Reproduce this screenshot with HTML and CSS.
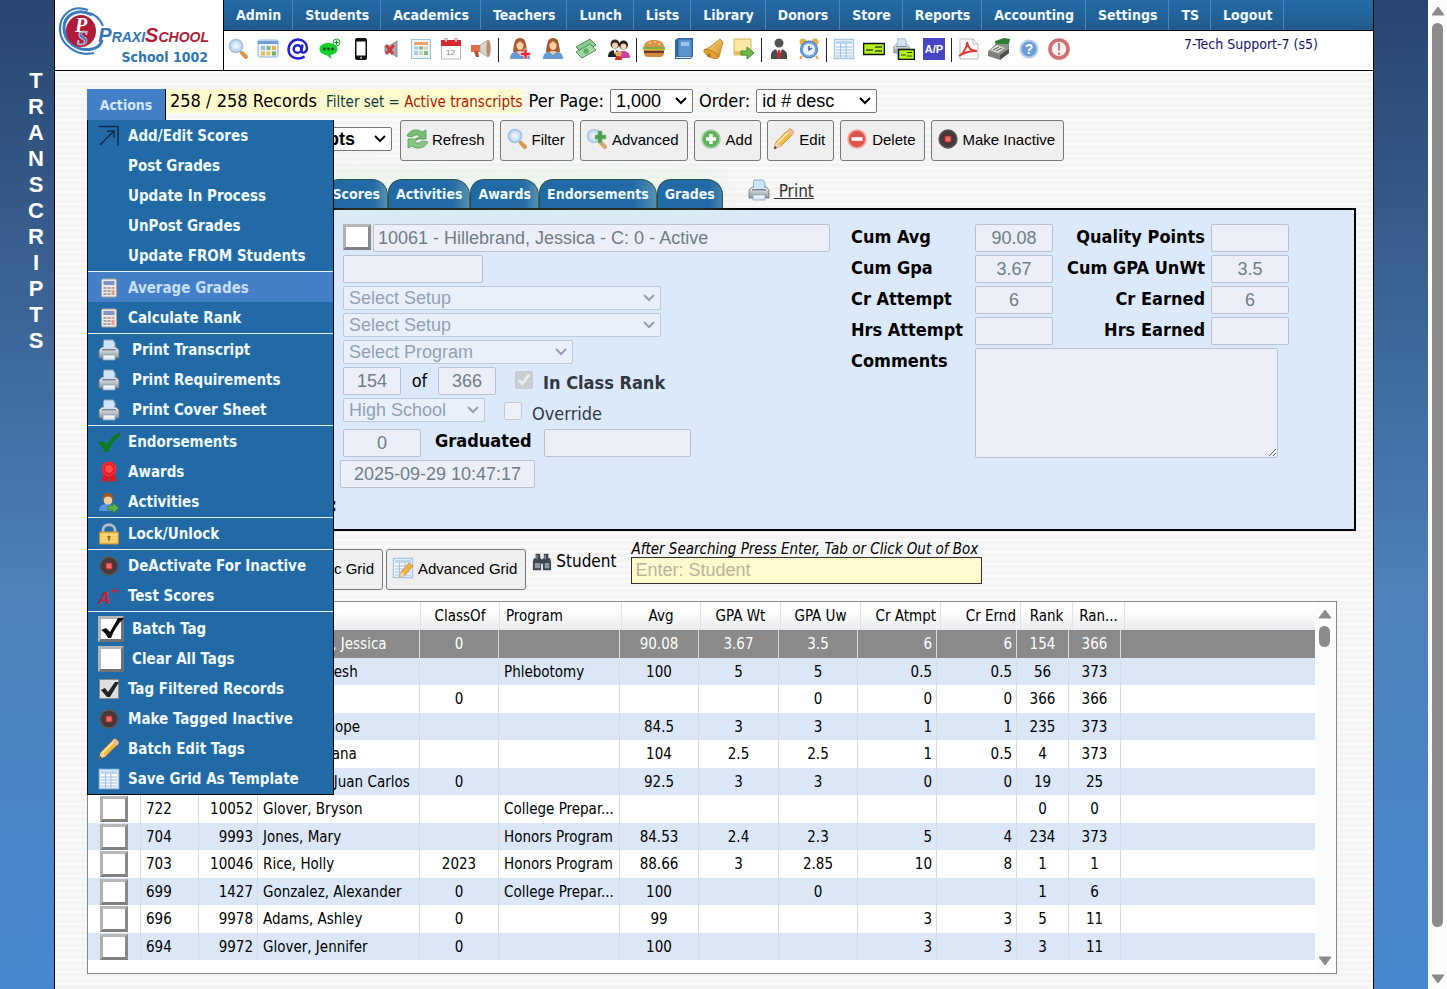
FILE: index.html
```html
<!DOCTYPE html>
<html lang="en">
<head>
    <meta charset="UTF-8">
    <meta name="viewport" content="width=device-width, initial-scale=1.0">
    <title>PraxiSchool - Transcripts</title>
    <link rel="stylesheet" href="styles.css">
</head>
<body>
    <!-- Icon sprite -->
    <svg class="sprite" aria-hidden="true">
        <defs>
            <linearGradient id="paper" x1="0" y1="0" x2="0" y2="1"><stop offset="0" stop-color="#fff"/><stop offset="1" stop-color="#cfdff0"/></linearGradient>
            <linearGradient id="metal" x1="0" y1="0" x2="0" y2="1"><stop offset="0" stop-color="#f2f4f6"/><stop offset="1" stop-color="#8b949e"/></linearGradient>
            <linearGradient id="gold" x1="0" y1="0" x2="1" y2="1"><stop offset="0" stop-color="#ffe08a"/><stop offset="1" stop-color="#d08a1c"/></linearGradient>
            <radialGradient id="lens"><stop offset="0" stop-color="#f4faff"/><stop offset="1" stop-color="#b4d3f2"/></radialGradient>
        </defs>
        <symbol id="i-search" viewBox="0 0 22 22">
            <path d="M13 13l5 5" stroke="#888" stroke-width="2"/>
            <path d="M15 15l4 4" stroke="#d9954a" stroke-width="4" stroke-linecap="round"/>
            <circle cx="9" cy="8" r="6.500" fill="url(#lens)" stroke="#a3bfe0" stroke-width="1.500"/>
        </symbol>
        <symbol id="i-advanced" viewBox="0 0 22 22">
            <path d="M15 15l4 4" stroke="#d9a56a" stroke-width="4" stroke-linecap="round"/>
            <circle cx="8" cy="8" r="6.500" fill="url(#lens)" stroke="#b0c8e4" stroke-width="1.500"/>
            <path d="M12 3h4v4h4v4h-4v4h-4v-4H9V7h3z" fill="#4f9c4c" stroke="#7fbf7a" stroke-width=".6"/>
        </symbol>
        <symbol id="i-window" viewBox="0 0 22 22">
            <rect x="1" y="2" width="20" height="17" rx="1.500" fill="#e9f1fa" stroke="#8fb0d4"/>
            <path d="M1 3h20v3H1z" fill="#6f9fd4"/>
            <path d="M4 8h4v4H4z" fill="#8fc0ea"/><path d="M9.500 8h4v4h-4z" fill="#7fb87a"/><path d="M15 8h4v4h-4z" fill="#e8b04c"/>
            <path d="M4 13.500h4v4H4z" fill="#f0b65a"/><path d="M9.500 13.500h4v4h-4z" fill="#e8c85c"/><path d="M15 13.500h4v4h-4z" fill="#6fae68"/>
        </symbol>
        <symbol id="i-at" viewBox="0 0 22 22">
            <g fill="none" stroke="#2222cc" stroke-width="2.400"><circle cx="10.500" cy="11" r="3.800"/><path d="M15.500 6.500l-1 7c0 2 5.500 1.500 5.500-3.500C20 5 16 1.500 11 1.500S1.500 6 1.500 11.500 6 20.500 11 20.500c3 0 5-.8 6.500-2"/></g>
        </symbol>
        <symbol id="i-chat" viewBox="0 0 22 22">
            <path d="M9.500 5C4.500 5 1 7.500 1 11s3 5.500 7 6l5 4-1-4c4-.5 7-2.500 7-6s-4-6-9.500-6z" fill="#14d02c"/>
            <g fill="#0b4d12"><circle cx="6" cy="11" r="1.400"/><circle cx="10" cy="11" r="1.400"/><circle cx="14" cy="11" r="1.400"/></g>
            <circle cx="18" cy="4.500" r="3.500" fill="#d6f5d8" stroke="#2c9c3a"/><path d="M18 2.500v4M16 4.500h4" stroke="#1d7a28"/>
        </symbol>
        <symbol id="i-phone" viewBox="0 0 22 22">
            <rect x="5" y="0" width="12" height="22" rx="2" fill="#111"/><rect x="6.500" y="3.500" width="9" height="14" fill="#fff"/><circle cx="11" cy="19.700" r="1" fill="#bbb"/>
        </symbol>
        <symbol id="i-mute" viewBox="0 0 22 22">
            <path d="M5 8h4l8-5v16l-8-5H5z" fill="#a9adb2" stroke="#77797c" stroke-width=".8"/>
            <path d="M6 7l7 9M14 7l-8 9" stroke="#cc3a40" stroke-width="3"/>
        </symbol>
        <symbol id="i-schedule" viewBox="0 0 22 22">
            <rect x="1.500" y="1.500" width="19" height="19" fill="#eef5fb" stroke="#9cc0e0"/>
            <path d="M4 4h14v3H4z" fill="#f0a468"/><path d="M4 8.500h4v3H4zM4 13h4v4H4z" fill="#a9cbe8"/>
            <path d="M9 8.500h4v3H9zM14 13h4v4h-4z" fill="#7fb78a"/><path d="M14 8.500h4v3h-4zM9 13h4v4H9z" fill="#c5ddb8"/>
        </symbol>
        <symbol id="i-megaphone" viewBox="0 0 22 22">
            <path d="M1 7l9 0v7H1z" fill="#e0714a"/><path d="M4 13h4l1 6H6z" fill="#b8502c"/>
            <path d="M10 7l8-5v17l-8-5z" fill="#d9d3cc" stroke="#a99f94" stroke-width=".8"/><ellipse cx="18.500" cy="10.500" rx="2.200" ry="8.500" fill="#b98d74"/>
        </symbol>
        <symbol id="i-woman" viewBox="0 0 22 22">
            <path d="M4 14C5 4 6 0 11 0s6 4 7 14z" fill="#a9592c"/>
            <ellipse cx="11" cy="7.500" rx="3.600" ry="4.600" fill="#f6cfa4"/><path d="M7 6c2-1 3-2 4-3 1 1 2 2 4 3-1-4-2-4.500-4-4.500S8 2 7 6z" fill="#a9592c"/>
            <path d="M1 21c0-5 3-7 6-7.500l4 3 4-3c3 .5 6 2.500 6 7.500z" fill="#6a9ad4"/><path d="M8 13h6l-3 4z" fill="#f3c699"/>
        </symbol>
        <symbol id="i-woman-add" viewBox="0 0 22 22">
            <use href="#i-woman"/><path d="M15 11h3v3.500h3.500v3H18V21h-3v-3.500h-3.500v-3H15z" fill="#ec2a2a" stroke="#fff" stroke-width=".6"/>
        </symbol>
        <symbol id="i-money" viewBox="0 0 22 22">
            <path d="M1 9L15 1l6 6L7 15z" fill="#8ccb92" stroke="#4b9455"/><path d="M1 14l14-8 6 6L7 20z" fill="#9fd8a2" stroke="#4b9455"/><circle cx="11" cy="13" r="2.600" fill="#5fa868"/>
        </symbol>
        <symbol id="i-people" viewBox="0 0 22 22">
            <circle cx="7" cy="6" r="4.500" fill="#3c2b22"/><circle cx="7" cy="7.500" r="3" fill="#f3cfa8"/>
            <path d="M0 19c0-5 3-7 7-7s6 3 6 7z" fill="#1f1f1f"/><path d="M5.500 12h3L7 17z" fill="#fff"/>
            <circle cx="15.500" cy="7" r="4.500" fill="#2a1d18"/><circle cx="15.500" cy="8.500" r="3" fill="#f7d7b6"/>
            <path d="M10 20c0-5 2-7 5.500-7s6.500 2 6.500 7z" fill="#c83fa6"/><circle cx="10.500" cy="16" r="3" fill="#e9a75c"/><path d="M7 22c0-3 1.500-4 3.500-4s3.500 1 3.500 4z" fill="#c8302c"/>
        </symbol>
        <symbol id="i-burger" viewBox="0 0 22 22">
            <path d="M1 9c0-5 4-7 10-7s10 2 10 7z" fill="#d99545"/><path d="M0 9h22v2.500H0z" fill="#76b043"/><path d="M0 11h22v1.500H0z" fill="#e8b030"/>
            <path d="M1 12.500h20V15H1z" fill="#6b3a1c"/><path d="M1 15h20c0 3-2 4-4 4H5c-2 0-4-1-4-4z" fill="#d08a3a"/><path d="M6 5h2M11 4h2M15 6h2" stroke="#fff0c8"/>
        </symbol>
        <symbol id="i-book" viewBox="0 0 22 22">
            <path d="M2 2l3-2h15v18l-2 3H2z" fill="#2f66a4"/><path d="M5 1h14v18H5z" fill="#5b93cf" stroke="#2f66a4"/><path d="M8 4h8v4H8z" fill="#9cc3ea"/><path d="M3 19.500h15" stroke="#e8eef5"/>
        </symbol>
        <symbol id="i-bell" viewBox="0 0 22 22">
            <path d="M17 1l3 3-3 11c0 3-1 4-2 5L1 12c2-1 4-2 6-3z" fill="url(#gold)" stroke="#b5781c" stroke-width=".8"/>
            <ellipse cx="8" cy="16" rx="8" ry="3" transform="rotate(28 8 16)" fill="#e0a236" stroke="#b5781c" stroke-width=".8"/><circle cx="6" cy="17.500" r="2" fill="#b5781c"/>
        </symbol>
        <symbol id="i-send" viewBox="0 0 22 22">
            <path d="M1 1h17v16H1z" fill="#fbe6a4" stroke="#d8b35a"/><path d="M2 15h8" stroke="#e0b860" stroke-width="3"/>
            <path d="M8 13h6V9l7 6-7 6v-4H8z" fill="#6cbb4c" stroke="#3c8a2a"/>
        </symbol>
        <symbol id="i-suit" viewBox="0 0 22 22">
            <circle cx="11" cy="5" r="4.500" fill="#5a5552"/><path d="M3 21c-1-7 2-10 8-10s9 3 8 10z" fill="#4a4a4f"/>
            <path d="M8 11h6l-3 7z" fill="#fff"/><path d="M10 12h2l1 6-2 3-2-3z" fill="#d8262c"/>
        </symbol>
        <symbol id="i-clock" viewBox="0 0 22 22">
            <path d="M4 18l-2 3M18 18l2 3" stroke="#d9a23a" stroke-width="2"/><circle cx="5" cy="4" r="3.500" fill="#e4b04c"/><circle cx="17" cy="4" r="3.500" fill="#e4b04c"/>
            <circle cx="11" cy="11.500" r="8.500" fill="#6ca4dc" stroke="#3f78b4"/><circle cx="11" cy="11.500" r="6" fill="#e8f3fc"/><path d="M11 8v4l3-2" stroke="#2d5f96" stroke-width="1.400" fill="none"/>
        </symbol>
        <symbol id="i-table" viewBox="0 0 22 22">
            <rect x="1.500" y="1.500" width="19" height="19" fill="#f6faff" stroke="#a9c8e8" stroke-width="1.500"/><path d="M3 3h16v3H3z" fill="#bcd6f0"/>
            <path d="M3 9h16M3 12h16M3 15h16M3 18h16M7.500 6v14M13 6v14" stroke="#9dbfe2"/>
        </symbol>
        <symbol id="i-check-slip" viewBox="0 0 22 22">
            <path d="M.5 5.500h21v11H.5z" fill="#b4f01e" stroke="#111" stroke-width="1.600"/><path d="M3 12h7M12 9h7M12 13h7" stroke="#3a4a10" stroke-width="1.300"/>
        </symbol>
        <symbol id="i-printer" viewBox="0 0 22 22">
            <path d="M6 1h9l2 3v7H5z" fill="#cfe3f8" stroke="#8aa9c8"/><path d="M1 11l3-3h14l3 3v8H1z" fill="url(#metal)" stroke="#6d757e" stroke-width=".8"/>
            <path d="M4 10h14v1.500H4z" fill="#7d858e"/><path d="M6 2h8l2 2v6H6z" fill="#cfe3f8"/><path d="M5 16h12v5H5z" fill="url(#paper)" stroke="#8fa6bd" stroke-width=".8"/>
        </symbol>
        <symbol id="i-print-check" viewBox="0 0 22 22">
            <svg x="0" y="0" width="17" height="17"><use href="#i-printer"/></svg>
            <path d="M5.500 11.500h16v10h-16z" fill="#b4f01e" stroke="#111" stroke-width="1.500"/><path d="M8 17h5M14 14.500h5M14 18h5" stroke="#3a4a10" stroke-width="1.200"/>
        </symbol>
        <symbol id="i-pdf" viewBox="0 0 22 22">
            <path d="M2 1h13l5 5v15H2z" fill="#fbfbfb" stroke="#bbb"/><path d="M15 1v5h5" fill="none" stroke="#bbb"/>
            <path d="M1 18c4-2 8-8 8-14 1 6 4 9 10 9-5 0-11 0-18 5z" fill="none" stroke="#e03a34" stroke-width="1.800"/>
        </symbol>
        <symbol id="i-register" viewBox="0 0 22 22">
            <path d="M7 3l9-3 6 1-1 5-13 4z" fill="#2f7d33"/><path d="M0 13L8 6l13 0v9l-9 6z" fill="#8c918a"/><path d="M2 12l7-5 8 3-7 5z" fill="#dcdfd6"/>
            <path d="M5 12l6-3M8 13l6-3" stroke="#555"/><path d="M0 13l12 4v5L0 18z" fill="#7b817a"/><path d="M12 17l9-6v4l-9 7z" fill="#4c504b"/>
        </symbol>
        <symbol id="i-alert" viewBox="0 0 22 22">
            <circle cx="11" cy="11" r="9" fill="#fbf3f2" stroke="#cf6f74" stroke-width="3.600"/><path d="M11 5v7.500M11 14.500v2.500" stroke="#c4807c" stroke-width="2.200"/>
        </symbol>
        <symbol id="i-refresh" viewBox="0 0 22 22">
            <path d="M1 8c2-6 10-8 15-4l4-2v9h-10l4-3c-3-2-6-1-8 1z" fill="#79bd74" stroke="#4f9950" stroke-width=".8"/>
            <path d="M22 14c-3 6-11 8-16 4l-4 2v-9h10l-4 3c3 2 6 1 8-1z" fill="#8ac885" stroke="#4f9950" stroke-width=".8"/>
        </symbol>
        <symbol id="i-add" viewBox="0 0 22 22">
            <circle cx="11" cy="11" r="9" fill="#5fb35c" stroke="#a5cfa2" stroke-width="1.600"/><path d="M11 6v10M6 11h10" stroke="#fff" stroke-width="3.400"/>
        </symbol>
        <symbol id="i-pencil" viewBox="0 0 22 22">
            <path d="M1 21l2-7L16 1c2-1 6 3 4 5L8 18z" fill="#f3b843" stroke="#b9822a" stroke-width=".8"/><path d="M4.500 15L16.500 3" stroke="#ffe5a0" stroke-width="2"/>
            <path d="M1 21l2-7 5 4z" fill="#ecd2a8"/><path d="M1 21l1-3 2 2z" fill="#333"/><path d="M14 3l5 5 1.500-2c1-2-2-5-4.500-5z" fill="#eab9a0"/>
        </symbol>
        <symbol id="i-delete" viewBox="0 0 22 22">
            <circle cx="11" cy="11" r="9" fill="#e0544e" stroke="#efa9a4" stroke-width="1.600"/><path d="M5.500 11h11" stroke="#fff" stroke-width="3.600"/>
        </symbol>
        <symbol id="i-stop" viewBox="0 0 22 22">
            <circle cx="11" cy="11" r="9" fill="#45393c" stroke="#5e5456" stroke-width="1.400"/><path d="M8 8h6v6H8z" fill="#f26a6a" stroke="#b5282c"/>
        </symbol>
        <symbol id="i-arrow" viewBox="0 0 22 22">
            <path d="M1 1.500h19v19M2 20L16 6M9 6h7v7" fill="none" stroke="#0d2c4c" stroke-width="1.500"/>
        </symbol>
        <symbol id="i-calc" viewBox="0 0 22 22">
            <rect x="3.500" y="2" width="15" height="18" rx="1.500" fill="#eee9e6" stroke="#a8a19c"/><path d="M5.500 4h11v4h-11z" fill="#7f93c4"/>
            <path d="M5.500 10h3v2h-3zM9.500 10h3v2h-3zM5.500 13h3v2h-3zM9.500 13h3v2h-3zM5.500 16h3v2h-3zM9.500 16h3v2h-3z" fill="#a8a3a6"/><path d="M13.500 10h3v2h-3zM13.500 13h3v5h-3z" fill="#dba18a"/>
        </symbol>
        <symbol id="i-tick" viewBox="0 0 22 22">
            <path d="M0 12l5-2 4 4C12 8 16 4 22 1v4C16 9 12 15 10 21H7C5 17 3 14 0 12z" fill="#0c7a1a"/>
        </symbol>
        <symbol id="i-award" viewBox="0 0 22 22">
            <path d="M6 12L3 21l4-1.500L10 22l1-8 1 8 3-2.500 4 1.500-3-9z" fill="#e81420"/><circle cx="11" cy="8" r="7.500" fill="#f5262e"/><circle cx="11" cy="8" r="4.500" fill="#ff4a4e" stroke="#d8141c"/>
        </symbol>
        <symbol id="i-activity" viewBox="0 0 22 22">
            <path d="M1 20c0-5 3-7 8-7s7 2 7 7z" fill="#5b96d8"/><circle cx="10" cy="7" r="5.500" fill="#9a5a2a"/><ellipse cx="10" cy="9.500" rx="4.200" ry="4" fill="#f5cda2"/>
            <path d="M10 15h5v-3l6 5-6 5v-3h-5z" fill="#5fb34c" stroke="#36812b" stroke-width=".7"/>
        </symbol>
        <symbol id="i-lock" viewBox="0 0 22 22">
            <path d="M5 10V7c0-7 12-7 12 0v3" fill="none" stroke="#b5bcc4" stroke-width="2.800"/><rect x="1.500" y="9" width="19" height="12" rx="1" fill="#f3c65c" stroke="#c08f2e"/>
            <path d="M3 12h16M3 15h16M3 18h16" stroke="#ffe39a"/><circle cx="11" cy="14" r="1.600" fill="#8a6216"/><path d="M10.300 14h1.400v4h-1.400z" fill="#8a6216"/>
        </symbol>
        <symbol id="i-box" viewBox="0 0 26 26">
            <path d="M0 0h26v26H0z" fill="#6e7275"/><path d="M0 0h26l-3 3H3v20l-3 3z" fill="#b4b8ba"/><path d="M3 3h20v20H3z" fill="#fff"/>
        </symbol>
        <symbol id="i-box-tag" viewBox="0 0 26 26">
            <use href="#i-box"/><path d="M3 14l5-2 4 4L20 2h6C20 8 16 14 13 22h-3c-2-4-4-6-7-8z" fill="#0a0a0a"/>
        </symbol>
        <symbol id="i-box-small" viewBox="0 0 22 22">
            <path d="M1.500 1.500h19v19h-19z" fill="#dedede" stroke="#8c8c8c"/><path d="M3 12l4-2 3 4L17 4h4l-9 15H9z" fill="#222"/>
        </symbol>
        <symbol id="i-grid-edit" viewBox="0 0 22 22">
            <use href="#i-table"/><path d="M8 20l1-5 8-9 4 3-8 9z" fill="#f0b548" stroke="#b9822a" stroke-width=".7"/><path d="M8 20l1-5 4 3z" fill="#f3dcb4"/>
        </symbol>
        <symbol id="i-find" viewBox="0 0 22 22">
            <path d="M4 2h5v5H4zM13 2h5v5h-5zM2 7h8v13H1V11zM12 7h8l1 4v9h-9zM9 8h4v5H9z" fill="#3c454f"/><path d="M3 12h6v6H3zM14 12h5v6h-5z" fill="#8c9aa8"/><path d="M5 3h1v5H5zM14 3h1v5h-1z" fill="#a9b4bf"/>
        </symbol>
        <symbol id="i-up" viewBox="0 0 14 10"><path d="M7 1l6 8H1z" fill="#8b8b8b" stroke="#8b8b8b" stroke-linejoin="round"/></symbol>
        <symbol id="i-down" viewBox="0 0 14 10"><path d="M7 9L1 1h12z" fill="#8b8b8b" stroke="#8b8b8b" stroke-linejoin="round"/></symbol>
    </svg>

    <div class="page">
        <aside class="side">
            <h1 class="side-title">TRANSCRIPTS</h1>
        </aside>

        <div class="main">
            <header class="header">
                <div class="logo">
                    <svg class="emblem" viewBox="0 0 48 50" aria-hidden="true">
                        <g fill="none" stroke="#3a7abf">
                            <path d="M30 3C14-3 1 8 2 24c1 13 16 26 34 22" stroke-width="2.200"/>
                            <path d="M34 8C20 0 6 8 6 21c0 14 14 24 28 21 5-1 9-4 10-9" stroke-width="3"/>
                            <path d="M28 6c9 0 14 6 17 13" stroke-width="2"/>
                        </g>
                        <ellipse cx="23" cy="24" rx="15" ry="16" fill="#b01c38"/>
                        <text x="17" y="25" font-size="20" font-weight="bold" font-style="italic" font-family="Liberation Serif" fill="#fff">P</text>
                        <text x="19" y="38" font-size="20" font-weight="bold" font-style="italic" font-family="Liberation Serif" fill="#3a7abf" stroke="#fff" stroke-width=".5">S</text>
                    </svg>
                    <div class="wordmark"><span>Praxi</span><b>School</b></div>
                    <div class="school">School 1002</div>
                </div>
                <div class="header-right">
                    <nav class="nav">
                        <a href="#">Admin</a><a href="#">Students</a><a href="#">Academics</a><a href="#">Teachers</a><a href="#">Lunch</a><a href="#">Lists</a><a href="#">Library</a><a href="#">Donors</a><a href="#">Store</a><a href="#">Reports</a><a href="#">Accounting</a><a href="#">Settings</a><a href="#">TS</a><a href="#">Logout</a>
                    </nav>
                    <div class="shortcuts">
                        <div class="group">
                            <svg class="icon"><use href="#i-search"/></svg>
                            <svg class="icon"><use href="#i-window"/></svg>
                            <svg class="icon"><use href="#i-at"/></svg>
                            <svg class="icon wide"><use href="#i-chat"/></svg>
                            <svg class="icon"><use href="#i-phone"/></svg>
                            <svg class="icon"><use href="#i-mute"/></svg>
                            <svg class="icon"><use href="#i-schedule"/></svg>
                            <svg class="icon" viewBox="0 0 22 22">
                                <rect x="1.500" y="3" width="19" height="18" fill="#fafafa" stroke="#bbb"/>
                                <path d="M1 2h20v6H1z" fill="#d42a2e"/><path d="M5 0h2v4H5zM15 0h2v4h-2z" fill="#fff" stroke="#a33" stroke-width=".6"/>
                                <text x="6" y="17" font-size="8" font-family="Liberation Sans" fill="#888">12</text>
                            </svg>
                            <svg class="icon"><use href="#i-megaphone"/></svg>
                        </div>
                        <div class="group loose">
                            <svg class="icon"><use href="#i-woman-add"/></svg>
                            <svg class="icon"><use href="#i-woman"/></svg>
                            <svg class="icon"><use href="#i-money"/></svg>
                            <svg class="icon"><use href="#i-people"/></svg>
                        </div>
                        <div class="group">
                            <svg class="icon"><use href="#i-burger"/></svg>
                            <svg class="icon"><use href="#i-book"/></svg>
                            <svg class="icon"><use href="#i-bell"/></svg>
                            <svg class="icon"><use href="#i-send"/></svg>
                        </div>
                        <div class="group">
                            <svg class="icon"><use href="#i-suit"/></svg>
                            <svg class="icon"><use href="#i-clock"/></svg>
                        </div>
                        <div class="group">
                            <svg class="icon"><use href="#i-table"/></svg>
                            <svg class="icon"><use href="#i-check-slip"/></svg>
                            <svg class="icon"><use href="#i-print-check"/></svg>
                            <svg class="icon" viewBox="0 0 22 22">
                                <path d="M0 0h22v22H0z" fill="#4646c4"/><text x="11" y="15" text-anchor="middle" font-size="11" font-weight="bold" font-family="Liberation Sans" fill="#fff">A/P</text>
                            </svg>
                        </div>
                        <div class="group">
                            <svg class="icon"><use href="#i-pdf"/></svg>
                            <svg class="icon"><use href="#i-register"/></svg>
                            <svg class="icon" viewBox="0 0 22 22">
                                <circle cx="11" cy="11" r="8.500" fill="#6d9cd6" stroke="#b9cde8" stroke-width="2"/><text x="11" y="16" text-anchor="middle" font-size="14" font-weight="bold" font-family="Liberation Sans" fill="#fff">?</text>
                            </svg>
                            <svg class="icon"><use href="#i-alert"/></svg>
                        </div>
                        <a class="user" href="#">7-Tech Support-7 (s5)</a>
                    </div>
                </div>
            </header>

            <main class="content">
                <div class="status-row">
                    <div class="actions">
                        <button class="actions-btn" type="button">Actions</button>
                        <div class="menu">
                            <div class="menu-group">
                                <a href="#"><svg class="icon"><use href="#i-arrow"/></svg>Add/Edit Scores</a>
                                <a href="#" class="no-icon">Post Grades</a>
                                <a href="#" class="no-icon">Update In Process</a>
                                <a href="#" class="no-icon">UnPost Grades</a>
                                <a href="#" class="no-icon">Update FROM Students</a>
                            </div>
                            <div class="menu-group">
                                <a href="#" class="active"><svg class="icon"><use href="#i-calc"/></svg>Average Grades</a>
                                <a href="#"><svg class="icon"><use href="#i-calc"/></svg>Calculate Rank</a>
                            </div>
                            <div class="menu-group indent">
                                <a href="#"><svg class="icon"><use href="#i-printer"/></svg>Print Transcript</a>
                                <a href="#"><svg class="icon"><use href="#i-printer"/></svg>Print Requirements</a>
                                <a href="#"><svg class="icon"><use href="#i-printer"/></svg>Print Cover Sheet</a>
                            </div>
                            <div class="menu-group">
                                <a href="#"><svg class="icon"><use href="#i-tick"/></svg>Endorsements</a>
                                <a href="#"><svg class="icon"><use href="#i-award"/></svg>Awards</a>
                                <a href="#"><svg class="icon"><use href="#i-activity"/></svg>Activities</a>
                            </div>
                            <div class="menu-group">
                                <a href="#"><svg class="icon"><use href="#i-lock"/></svg>Lock/Unlock</a>
                            </div>
                            <div class="menu-group">
                                <a href="#"><svg class="icon"><use href="#i-stop"/></svg>DeActivate For Inactive</a>
                                <a href="#">
                                    <svg class="icon" viewBox="0 0 22 22">
                                        <text x="0" y="19" font-size="17" font-weight="bold" font-style="italic" font-family="Liberation Sans" fill="#cc2030">A</text><path d="M13 6h7M16.500 3v6" stroke="#b8283c" stroke-width="1.600"/>
                                    </svg>Test Scores</a>
                            </div>
                            <div class="menu-group last">
                                <a href="#"><svg class="icon big"><use href="#i-box-tag"/></svg>Batch Tag</a>
                                <a href="#"><svg class="icon big"><use href="#i-box"/></svg>Clear All Tags</a>
                                <a href="#"><svg class="icon"><use href="#i-box-small"/></svg>Tag Filtered Records</a>
                                <a href="#"><svg class="icon"><use href="#i-stop"/></svg>Make Tagged Inactive</a>
                                <a href="#"><svg class="icon"><use href="#i-pencil"/></svg>Batch Edit Tags</a>
                                <a href="#"><svg class="icon"><use href="#i-table"/></svg>Save Grid As Template</a>
                            </div>
                        </div>
                    </div>
                    <div class="records">258 / 258 Records <span class="filter-set">Filter set = <em>Active transcripts</em></span></div>
                    <label for="perPage">Per Page:</label>
                    <select id="perPage" class="per-page"><option>1,000</option></select>
                    <label for="order">Order:</label>
                    <select id="order" class="order"><option>id # desc</option></select>
                </div>

                <div class="toolbar">
                    <div class="toolbar-lead">
                        <select class="view" aria-label="View"><option>Transcripts</option></select>
                    </div>
                    <button type="button" class="btn"><svg class="icon"><use href="#i-refresh"/></svg>Refresh</button>
                    <button type="button" class="btn"><svg class="icon"><use href="#i-search"/></svg>Filter</button>
                    <button type="button" class="btn"><svg class="icon"><use href="#i-advanced"/></svg>Advanced</button>
                    <button type="button" class="btn"><svg class="icon"><use href="#i-add"/></svg>Add</button>
                    <button type="button" class="btn"><svg class="icon"><use href="#i-pencil"/></svg>Edit</button>
                    <button type="button" class="btn"><svg class="icon"><use href="#i-delete"/></svg>Delete</button>
                    <button type="button" class="btn"><svg class="icon"><use href="#i-stop"/></svg>Make Inactive</button>
                </div>

                <div class="tabs">
                    <div class="tabs-lead"><a class="tab" href="#">Scores</a></div>
                    <a class="tab" href="#">Activities</a>
                    <a class="tab" href="#">Awards</a>
                    <a class="tab" href="#">Endorsements</a>
                    <a class="tab" href="#">Grades</a>
                    <a class="print" href="#"><svg class="icon"><use href="#i-printer"/></svg><span>&nbsp;Print</span></a>
                </div>

                <form class="panel">
                    <div class="details">
                        <div class="line">
                            <input class="box" type="checkbox" aria-label="Tag record">
                            <input class="student" type="text" aria-label="Student" value="10061 - Hillebrand, Jessica - C: 0 - Active" disabled>
                        </div>
                        <div class="line"><input class="code" type="text" aria-label="Code" disabled></div>
                        <select class="setup" aria-label="Transcript setup" disabled><option>Select Setup</option></select>
                        <select class="setup" aria-label="Grade setup" disabled><option>Select Setup</option></select>
                        <select class="program" aria-label="Program" disabled><option>Select Program</option></select>
                        <div class="line">
                            <input class="num rank" id="rank" type="text" value="154" aria-label="Rank" disabled>
                            <label class="of" for="rankOf">of</label>
                            <input class="num rank" id="rankOf" type="text" value="366" disabled>
                            <input class="tick" id="inRank" type="checkbox" checked disabled>
                            <label class="strong soft" for="inRank">In Class Rank</label>
                        </div>
                        <div class="line">
                            <select class="level" aria-label="School level" disabled><option>High School</option></select>
                            <input class="tick" id="override" type="checkbox" disabled>
                            <label class="soft" for="override">Override</label>
                        </div>
                        <div class="line">
                            <input class="num" type="text" value="0" aria-label="Class of" disabled>
                            <label class="strong graduated" for="graduated">Graduated</label>
                            <input class="grad-date" id="graduated" type="text" disabled>
                        </div>
                        <div class="line"><input class="num stamp" type="text" value="2025-09-29 10:47:17" aria-label="Updated" disabled></div>
                        <div class="line locked">:</div>
                    </div>

                    <div class="totals">
                        <label for="cumAvg">Cum Avg</label>
                        <input class="num" id="cumAvg" type="text" value="90.08" disabled>
                        <label class="right" for="quality">Quality Points</label>
                        <input class="num" id="quality" type="text" disabled>
                        <label for="cumGpa">Cum Gpa</label>
                        <input class="num" id="cumGpa" type="text" value="3.67" disabled>
                        <label class="right" for="gpaUnwt">Cum GPA UnWt</label>
                        <input class="num" id="gpaUnwt" type="text" value="3.5" disabled>
                        <label for="crAttempt">Cr Attempt</label>
                        <input class="num" id="crAttempt" type="text" value="6" disabled>
                        <label class="right" for="crEarned">Cr Earned</label>
                        <input class="num" id="crEarned" type="text" value="6" disabled>
                        <label for="hrsAttempt">Hrs Attempt</label>
                        <input class="num" id="hrsAttempt" type="text" disabled>
                        <label class="right" for="hrsEarned">Hrs Earned</label>
                        <input class="num" id="hrsEarned" type="text" disabled>
                        <label for="comments">Comments</label>
                        <textarea id="comments" disabled></textarea>
                    </div>
                </form>

                <div class="search-row">
                    <div class="search-lead"><button type="button" class="btn"><svg class="icon"><use href="#i-table"/></svg>Basic Grid</button></div>
                    <button type="button" class="btn"><svg class="icon"><use href="#i-grid-edit"/></svg>Advanced Grid</button>
                    <label class="find" for="findStudent"><svg class="icon"><use href="#i-find"/></svg>Student</label>
                    <div class="find-box">
                        <i>After Searching Press Enter, Tab or Click Out of Box</i>
                        <input id="findStudent" type="text" placeholder="Enter: Student">
                    </div>
                </div>

                <div class="grid">
                    <div class="grid-tables">
                        <table class="grid-head">
                            <colgroup><col class="c-tag"><col class="c-id"><col class="c-num"><col class="c-name"><col class="c-class"><col class="c-prog"><col class="c-avg"><col class="c-val"><col class="c-val"><col class="c-val"><col class="c-val"><col class="c-rank"><col class="c-rank"><col></colgroup>
                            <tr><th></th><th></th><th></th><th></th><th>ClassOf</th><th class="left">Program</th><th>Avg</th><th>GPA Wt</th><th>GPA Uw</th><th class="end">Cr Atmpt</th><th class="end">Cr Ernd</th><th>Rank</th><th>Ran...</th><th></th></tr>
                        </table>
                        <table class="grid-body">
                            <colgroup><col class="c-tag"><col class="c-id"><col class="c-num"><col class="c-name"><col class="c-class"><col class="c-prog"><col class="c-avg"><col class="c-val"><col class="c-avg"><col class="c-avg"><col class="c-val"><col class="c-rank"><col class="c-rank"><col></colgroup>
                            <tr class="selected"><td></td><td></td><td></td><td>Hillebrand, Jessica</td><td>0</td><td></td><td>90.08</td><td>3.67</td><td>3.5</td><td>6</td><td>6</td><td>154</td><td>366</td><td></td></tr>
                            <tr><td></td><td></td><td></td><td>Kiran, Ganesh</td><td></td><td>Phlebotomy</td><td>100</td><td>5</td><td>5</td><td>0.5</td><td>0.5</td><td>56</td><td>373</td><td></td></tr>
                            <tr><td></td><td></td><td></td><td></td><td>0</td><td></td><td></td><td></td><td>0</td><td>0</td><td>0</td><td>366</td><td>366</td><td></td></tr>
                            <tr><td></td><td></td><td></td><td>Weiss, Ashope</td><td></td><td></td><td>84.5</td><td>3</td><td>3</td><td>1</td><td>1</td><td>235</td><td>373</td><td></td></tr>
                            <tr><td></td><td></td><td></td><td>Cason, Briana</td><td></td><td></td><td>104</td><td>2.5</td><td>2.5</td><td>1</td><td>0.5</td><td>4</td><td>373</td><td></td></tr>
                            <tr><td></td><td></td><td></td><td>Gutierrez, Juan Carlos</td><td>0</td><td></td><td>92.5</td><td>3</td><td>3</td><td>0</td><td>0</td><td>19</td><td>25</td><td></td></tr>
                            <tr><td><input class="box" type="checkbox" aria-label="Tag 722"></td><td>722</td><td>10052</td><td>Glover, Bryson</td><td></td><td>College Prepar...</td><td></td><td></td><td></td><td></td><td></td><td>0</td><td>0</td><td></td></tr>
                            <tr><td><input class="box" type="checkbox" aria-label="Tag 704"></td><td>704</td><td>9993</td><td>Jones, Mary</td><td></td><td>Honors Program</td><td>84.53</td><td>2.4</td><td>2.3</td><td>5</td><td>4</td><td>234</td><td>373</td><td></td></tr>
                            <tr><td><input class="box" type="checkbox" aria-label="Tag 703"></td><td>703</td><td>10046</td><td>Rice, Holly</td><td>2023</td><td>Honors Program</td><td>88.66</td><td>3</td><td>2.85</td><td>10</td><td>8</td><td>1</td><td>1</td><td></td></tr>
                            <tr><td><input class="box" type="checkbox" aria-label="Tag 699"></td><td>699</td><td>1427</td><td>Gonzalez, Alexander</td><td>0</td><td>College Prepar...</td><td>100</td><td></td><td>0</td><td></td><td></td><td>1</td><td>6</td><td></td></tr>
                            <tr><td><input class="box" type="checkbox" aria-label="Tag 696"></td><td>696</td><td>9978</td><td>Adams, Ashley</td><td>0</td><td></td><td>99</td><td></td><td></td><td>3</td><td>3</td><td>5</td><td>11</td><td></td></tr>
                            <tr><td><input class="box" type="checkbox" aria-label="Tag 694"></td><td>694</td><td>9972</td><td>Glover, Jennifer</td><td>0</td><td></td><td>100</td><td></td><td></td><td>3</td><td>3</td><td>3</td><td>11</td><td></td></tr>
                        </table>
                    </div>
                    <div class="scroll grid-scroll">
                        <svg class="caret"><use href="#i-up"/></svg>
                        <div class="thumb"></div>
                        <svg class="caret last"><use href="#i-down"/></svg>
                    </div>
                </div>
            </main>
        </div>

        <div class="side"></div>

        <div class="scroll page-scroll">
            <svg class="caret"><use href="#i-up"/></svg>
            <div class="thumb"></div>
            <svg class="caret last"><use href="#i-down"/></svg>
        </div>
    </div>
</body>
</html>
```
FILE: styles.css
```css
* {
    box-sizing: border-box;
}

body {
    margin: 0;
    font-family: "DejaVu Sans Condensed", "Noto Sans", sans-serif;
    font-size: 14px;
    color: #000;
}

a {
    color: inherit;
    text-decoration: none;
}

input, select, textarea, button {
    font-family: "Liberation Sans", Arial, sans-serif;
    font-size: 18px;
    margin: 0;
}

select {
    appearance: none;
    height: 24px;
    padding: 0 24px 0 5px;
    border: 1px solid #767676;
    border-radius: 2px;
    background: #fff url("data:image/svg+xml,%3Csvg xmlns='http://www.w3.org/2000/svg' width='12' height='8'%3E%3Cpath d='M1 1l5 5 5-5' fill='none' stroke='black' stroke-width='2'/%3E%3C/svg%3E") no-repeat right 5px center;
    color: #000;
}

select:disabled {
    background-image: url("data:image/svg+xml,%3Csvg xmlns='http://www.w3.org/2000/svg' width='12' height='8'%3E%3Cpath d='M1 1l5 5 5-5' fill='none' stroke='slategray' stroke-width='2'/%3E%3C/svg%3E");
}

.sprite {
    position: absolute;
    width: 0;
    height: 0;
}

.icon {
    width: 22px;
    height: 22px;
    flex: none;
}

/* Page frame */
.page {
    display: grid;
    grid-template-columns: 54px 1fr 54px 19px;
    height: 100vh;
    overflow: hidden;
    background: linear-gradient(#27466f, #4f81bb 60%, #4688d0);
}

.side-title {
    width: 20px;
    margin: 68px 0 0 26px;
    font: bold 22px/26px "Liberation Sans", Arial, sans-serif;
    color: #fff;
    text-align: center;
    word-break: break-all;
}

.main {
    border: solid #000;
    border-width: 0 1px;
    background: repeating-linear-gradient(#fcfcfc 0, #f3f3f3 2px, #f3f3f3 4px, #fcfcfc 6px);
}

/* Header */
.header {
    display: flex;
    height: 71px;
    background: #fff;
    border-bottom: 1px solid #000;
}

.logo {
    position: relative;
    width: 169px;
    border-right: 1px solid #000;
}

.emblem {
    position: absolute;
    left: 3px;
    top: 7px;
    width: 48px;
    height: 50px;
}

.wordmark {
    position: relative;
    padding: 24px 14px 0 0;
    font: italic bold 20px/22px "Liberation Sans", Arial, sans-serif;
    font-variant: small-caps;
    text-align: right;
    color: #3474b4;
}

.wordmark b {
    color: #b01c38;
}

.school {
    padding-right: 15px;
    text-align: right;
    font-weight: bold;
    line-height: 22px;
    color: #2f76b4;
}

.header-right {
    flex: 1;
}

.nav {
    display: flex;
    height: 31px;
    border-bottom: 1px solid #000;
    background: linear-gradient(#236ba8, #225a8c);
}

.nav a {
    padding: 0 11px 0 12px;
    border-right: 1px solid #4a86ba;
    font-weight: bold;
    line-height: 30px;
    color: #f0f8ff;
}

.shortcuts {
    display: flex;
    padding: 7px 55px 0 0;
}

.group {
    display: flex;
    gap: 8px;
    height: 24px;
    padding: 0 6px;
    border-left: 1px solid #222;
}

.group:first-child {
    padding-left: 3px;
    border: 0;
}

.group.loose {
    gap: 11px;
    padding-left: 10px;
}

.icon.wide {
    width: 25px;
}

.user {
    margin-left: auto;
    line-height: 12px;
    color: #14146e;
}

/* Status row and actions menu */
.content {
    padding: 18px 17px 0 32px;
}

.status-row {
    display: flex;
    height: 31px;
    line-height: 24px;
    font-size: 18px;
}

.status-row label {
    padding: 0 6px;
}

.actions {
    position: relative;
}

.actions-btn {
    width: 79px;
    height: 31px;
    padding: 0;
    border: 0;
    border-right: 1px solid #000;
    background: #4380c8;
    font: bold 14px "DejaVu Sans Condensed", "Noto Sans", sans-serif;
    color: #d4e6fa;
}

.menu {
    position: absolute;
    z-index: 5;
    top: 100%;
    left: 0;
    width: 247px;
    border: solid #000;
    border-width: 0 1px 1px;
    background: #226aa6;
    font-size: 15px;
    font-weight: bold;
    color: #f0faff;
}

.menu-group {
    padding-bottom: 1px;
    border-bottom: 1px solid #e4f2fa;
}

.menu-group.last {
    padding-top: 1px;
    border: 0;
}

.menu a {
    display: flex;
    align-items: center;
    gap: 8px;
    height: 30px;
    padding: 2px 0 0 10px;
}

.menu a.no-icon {
    padding-left: 40px;
}

.menu a.active {
    background: #4380c8;
    color: #c8dff8;
}

.menu .indent a {
    gap: 12px;
}

.icon.big {
    width: 26px;
    height: 26px;
}

.records {
    height: 24px;
    padding: 0 0 0 4px;
    background: #fffacd;
    white-space: nowrap;
}

.filter-set {
    padding-left: 4px;
    font-size: 15px;
    color: #0c4040;
}

.filter-set em {
    font-style: normal;
    color: #b01800;
}

.per-page {
    width: 83px;
}

.order {
    width: 121px;
}

/* Toolbar */
.toolbar {
    display: flex;
    gap: 6px;
}

.toolbar-lead {
    display: flex;
    justify-content: flex-end;
    align-items: center;
    width: 307px;
    padding: 0 2px 3px 0;
}

.view {
    width: 140px;
    font-weight: bold;
}

.btn {
    display: flex;
    align-items: center;
    gap: 4px;
    height: 41px;
    padding: 0 8px 3px 5px;
    border: 1px solid #777;
    border-radius: 3px;
    background: #efefef;
    font-size: 15px;
    color: #000;
    white-space: nowrap;
}

/* Tabs */
.tabs {
    display: flex;
    margin-top: 18px;
}

.tabs-lead {
    display: flex;
    justify-content: flex-end;
    width: 301px;
}

.tab {
    height: 29px;
    padding: 0 7px;
    border: 1px solid #2c5048;
    border-bottom: 0;
    border-radius: 14px 16px 0 0;
    background: linear-gradient(to right, #226aa6 80%, #4884b0);
    font-weight: bold;
    line-height: 29px;
    color: #f0faff;
    box-shadow: 0 0 30px rgba(200, 245, 200, 0.4);
}

.print {
    display: flex;
    gap: 4px;
    padding-left: 25px;
    font-size: 17px;
    line-height: 24px;
    color: #333;
}

.print span {
    text-decoration: underline;
}

/* Record panel */
.panel {
    display: flex;
    height: 323px;
    padding-top: 14px;
    border: 2px solid #000;
    border-left-width: 1px;
    background: #dce9fa;
}

.panel input:disabled, .panel textarea {
    height: 28px;
    padding: 0 4px;
    border: 1px solid #b8c2d2;
    border-radius: 2px;
    background: #eceff7;
    color: #707c88;
}

.panel select {
    border-color: #b0bccd;
    background-color: #f0f3fa;
    color: #748298;
}

.details {
    display: flex;
    flex-direction: column;
    align-items: flex-start;
    gap: 3px;
    width: 763px;
    padding-left: 255px;
    font-size: 18px;
}

.line {
    display: flex;
    height: 28px;
    line-height: 28px;
}

.box {
    appearance: none;
    display: block;
    width: 28px;
    height: 26px;
    border: 3px solid;
    border-color: #b8b8b8 #8a8a8a #808080 #b0b0b0;
    background: #fff;
}

.panel .num {
    width: 78px;
    text-align: center;
}

.panel .rank {
    width: 58px;
}

.panel .stamp {
    width: 195px;
    margin-left: -3px;
}

.student {
    width: 457px;
    margin-left: 2px;
}

.code {
    width: 140px;
}

.setup {
    width: 318px;
}

.program {
    width: 230px;
}

.level {
    width: 142px;
}

.grad-date {
    width: 147px;
}

.of {
    width: 37px;
    text-align: center;
}

.strong {
    font-weight: bold;
}

.soft {
    padding-left: 10px;
    line-height: 32px;
    color: #303840;
}

.graduated {
    padding: 0 12px 0 14px;
    line-height: 24px;
}

.panel .tick:disabled {
    width: 18px;
    height: 18px;
    margin: 4px 0 0 19px;
}

.locked {
    width: 250px;
    margin-left: -256px;
    justify-content: flex-end;
    font-weight: bold;
}

.totals {
    display: grid;
    grid-template-columns: 124px 78px 158px 78px;
    grid-auto-rows: 28px;
    row-gap: 3px;
    font-size: 18px;
    font-weight: bold;
    line-height: 26px;
}

.totals .right {
    padding-right: 6px;
    text-align: right;
}

.totals textarea {
    grid-column: 2 / 5;
    width: 303px;
    height: 110px;
}

/* Search row */
.search-row {
    display: flex;
    padding-top: 18px;
}

.search-lead {
    display: flex;
    justify-content: flex-end;
    width: 296px;
    margin-right: 3px;
}

.find {
    display: flex;
    gap: 4px;
    padding: 2px 15px 0 6px;
    font-size: 17px;
    line-height: 20px;
}

.find .icon {
    width: 20px;
}

.find-box {
    width: 351px;
    line-height: 16px;
    margin-top: -8px;
}

.find-box i {
    display: block;
    font-size: 15px;
    white-space: nowrap;
}

.find-box input {
    display: block;
    width: 100%;
    height: 27px;
    padding: 0 3px;
    border: 1px solid #333;
    background: #fffacd;
}

.find-box input::placeholder {
    color: #b8b49c;
}

/* Grid */
.grid {
    display: flex;
    width: 1250px;
    max-width: 100%;
    height: 373px;
    margin-top: 11px;
    border: 1px solid #888;
    background: #fff;
}

.grid-tables {
    flex: 1;
}

.grid table {
    width: 100%;
    table-layout: fixed;
    border-collapse: separate;
    border-spacing: 0;
    font-size: 15px;
}

.grid th, .grid td {
    padding: 0;
    border-right: 1px solid #d8dce0;
    text-align: center;
    white-space: nowrap;
    overflow: hidden;
}

.grid th:last-child, .grid td:last-child {
    border: 0;
}

.grid th {
    height: 28px;
    background: linear-gradient(#fff 30%, #ebecef);
    border-color: #e4e4e8;
    font-weight: normal;
}

.grid th.left {
    padding-left: 6px;
    text-align: left;
}

.grid th.end {
    padding-right: 4px;
    text-align: right;
}

.grid td {
    height: 28px;
}

.grid tr:nth-child(even) td {
    height: 27px;
    background: #dbe7f6;
}

.grid .selected td {
    background: #8a8a8a;
    color: #fff;
}

.grid td:nth-child(2), .grid td:nth-child(4), .grid td:nth-child(6) {
    padding-left: 5px;
    text-align: left;
}

.grid td:nth-child(3), .grid td:nth-child(10), .grid td:nth-child(11) {
    padding-right: 4px;
    text-align: right;
}

.grid .box {
    margin: 0 auto;
}

.c-tag { width: 53px; }
.c-id { width: 58px; }
.c-num { width: 59px; }
.c-name { width: 162px; }
.c-class { width: 79px; }
.c-prog { width: 121px; }
.c-avg { width: 79px; }
.c-val { width: 80px; }
.c-rank { width: 52px; }
.grid-head .c-name { width: 163px; }
.grid-head .c-prog { width: 122px; }

/* Scroll bars */
.scroll {
    display: flex;
    flex-direction: column;
    align-items: center;
    background: #fcfcfc;
}

.caret {
    width: 14px;
    height: 10px;
}

.caret.last {
    margin-top: auto;
}

.thumb {
    width: 11px;
    border-radius: 6px;
    background: #8b8b8b;
}

.grid-scroll {
    width: 21px;
    padding: 7px 2px 7px 0;
}

.grid-scroll .thumb {
    height: 21px;
    margin-top: 7px;
}

.page-scroll {
    padding: 6px 0 5px;
}

.page-scroll .thumb {
    height: 904px;
    margin-top: 7px;
}
```
